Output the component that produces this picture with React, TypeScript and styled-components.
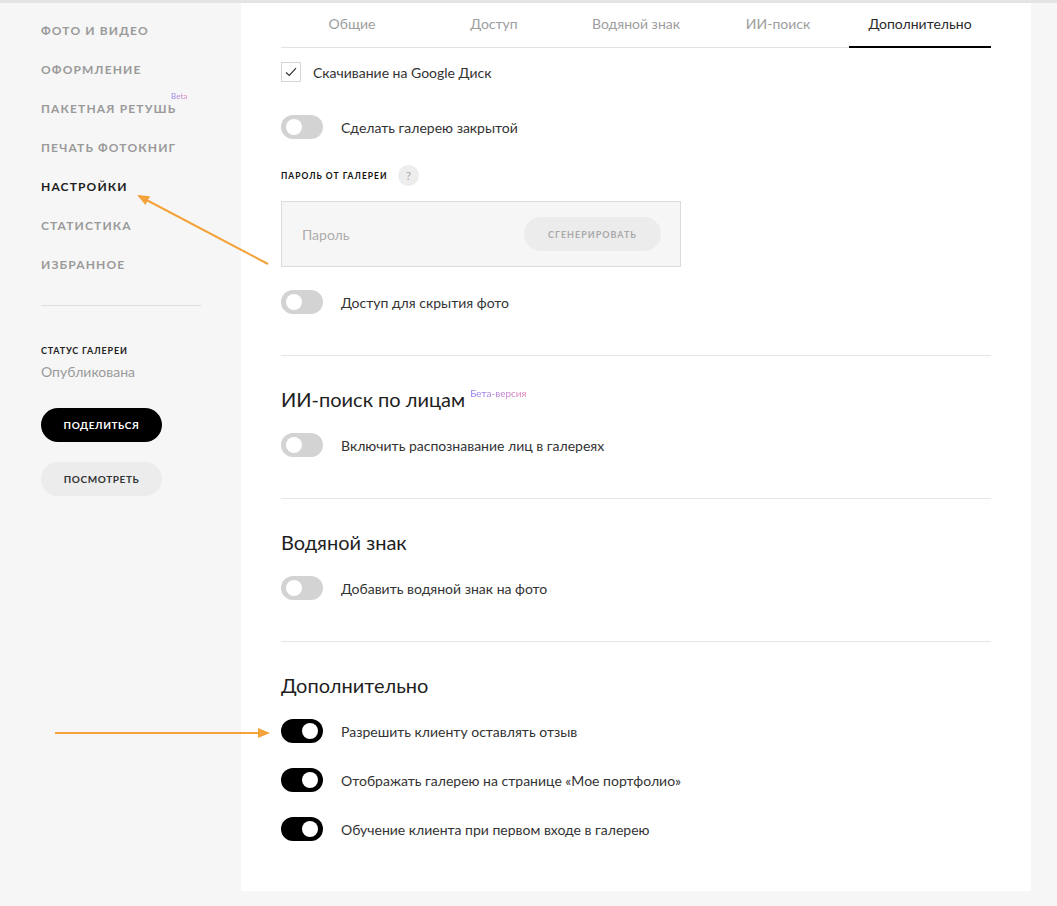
import React from "react";
import styled, { createGlobalStyle } from "styled-components";

const GlobalStyle = createGlobalStyle`
  html, body {
    margin: 0;
    padding: 0;
    background: #f6f6f6;
    font-family: Lato, "Open Sans", sans-serif;
    color: #333;
  }
  * { box-sizing: border-box; }
`;

const Page = styled.div`
  position: relative;
  width: 1057px;
  height: 906px;
  border-top: 3px solid #e4e4e4;
  display: flex;
  background: #f6f6f6;
  overflow: hidden;
`;

const Sidebar = styled.aside`
  width: 241px;
  padding: 8px 0 0 41px;
  display: flex;
  flex-direction: column;
`;

const NavItem = styled.div<{ $active?: boolean }>`
  position: relative;
  height: 39px;
  line-height: 39px;
  font-size: 12px;
  font-weight: 700;
  letter-spacing: 1.15px;
  text-transform: uppercase;
  color: ${(p) => (p.$active ? "#1d1d1d" : "#9a9a9a")};
  width: max-content;
`;

const BetaTag = styled.span`
  position: absolute;
  right: -11px;
  top: -12px;
  font-size: 8px;
  font-weight: 400;
  letter-spacing: 0;
  text-transform: none;
  background: linear-gradient(90deg, #8b7cf2, #e27fb7);
  -webkit-background-clip: text;
  background-clip: text;
  color: transparent;
`;

const SideDivider = styled.hr`
  width: 160px;
  margin: 21px 0 0;
  border: none;
  border-top: 1px solid #dedede;
`;

const StatusLabel = styled.div`
  margin-top: 39px;
  font-size: 9px;
  font-weight: 700;
  letter-spacing: 0.8px;
  color: #222;
`;

const StatusValue = styled.div`
  margin-top: 7px;
  font-size: 14px;
  color: #9a9a9a;
`;

const PillButton = styled.button<{ $dark?: boolean }>`
  width: 121px;
  height: 34px;
  border: none;
  border-radius: 17px;
  font-family: inherit;
  font-size: 10px;
  font-weight: 700;
  letter-spacing: 0.6px;
  background: ${(p) => (p.$dark ? "#000" : "#ececec")};
  color: ${(p) => (p.$dark ? "#fff" : "#333")};
  margin-top: ${(p) => (p.$dark ? "28px" : "20px")};
`;

const Panel = styled.main`
  width: 790px;
  height: 888px;
  background: #fff;
  padding: 0 40px;
`;

const Tabs = styled.nav`
  display: grid;
  grid-template-columns: repeat(5, 1fr);
  border-bottom: 1px solid #e3e3e3;
`;

const Tab = styled.div<{ $active?: boolean }>`
  height: 45px;
  display: flex;
  align-items: center;
  justify-content: center;
  padding-bottom: 3px;
  font-size: 14px;
  color: ${(p) => (p.$active ? "#2b2b2b" : "#9d9d9d")};
  border-bottom: 2px solid ${(p) => (p.$active ? "#000" : "transparent")};
  margin-bottom: -1px;
`;

const Row = styled.div<{ $top: number }>`
  display: flex;
  align-items: center;
  margin-top: ${(p) => p.$top}px;
  font-size: 14px;
  color: #333;
`;

const Checkbox = styled.span`
  width: 20px;
  height: 20px;
  border: 1px solid #d6d6d6;
  display: flex;
  align-items: center;
  justify-content: center;
  margin-right: 12px;
`;

const Track = styled.span<{ $on?: boolean }>`
  position: relative;
  width: 42px;
  height: 24px;
  border-radius: 12px;
  background: ${(p) => (p.$on ? "#000" : "#d3d3d3")};
  margin-right: 18px;
  flex-shrink: 0;
  &::after {
    content: "";
    position: absolute;
    top: 4px;
    left: ${(p) => (p.$on ? "21px" : "5px")};
    width: 16px;
    height: 16px;
    border-radius: 50%;
    background: #fff;
  }
`;

const FieldLabel = styled.div`
  margin-top: 26px;
  display: flex;
  align-items: center;
  font-size: 8.5px;
  font-weight: 700;
  letter-spacing: 1px;
  color: #111;
`;

const Help = styled.span`
  width: 21px;
  height: 21px;
  border-radius: 50%;
  background: #ededed;
  color: #aaa;
  font-size: 12px;
  font-weight: 400;
  display: flex;
  align-items: center;
  justify-content: center;
  margin-left: 11px;
`;

const PasswordBox = styled.div`
  width: 400px;
  height: 66px;
  margin-top: 15px;
  background: #f6f6f6;
  border: 1px solid #dcdcdc;
  display: flex;
  align-items: center;
  justify-content: space-between;
  padding: 0 19px 0 20px;
`;

const Placeholder = styled.span`
  font-size: 14px;
  color: #adadad;
`;

const GenButton = styled.span`
  width: 137px;
  height: 34px;
  border-radius: 17px;
  background: #ececec;
  color: #a9a9a9;
  font-size: 9px;
  font-weight: 700;
  letter-spacing: 1px;
  display: flex;
  align-items: center;
  justify-content: center;
`;

const Divider = styled.hr<{ $top: number }>`
  margin: ${(p) => p.$top}px 0 0;
  border: none;
  border-top: 1px solid #e6e6e6;
`;

const Heading = styled.h2`
  margin: 29px 0 0;
  font-size: 20px;
  font-weight: 400;
  color: #1e1e1e;
  line-height: 28px;
  display: flex;
  align-items: flex-start;
`;

const BetaSup = styled.span`
  font-size: 10px;
  margin-top: -6px;
  margin-left: 5px;
  background: linear-gradient(90deg, #8b7cf2, #e27fb7);
  -webkit-background-clip: text;
  background-clip: text;
  color: transparent;
`;

const Overlay = styled.svg`
  position: absolute;
  left: 0;
  top: -3px;
  pointer-events: none;
`;

const Toggle = ({ on, label, top }: { on?: boolean; label: string; top: number }) => (
  <Row $top={top}>
    <Track $on={on} />
    {label}
  </Row>
);

const nav = ["Фото и видео", "Оформление", "Пакетная ретушь", "Печать фотокниг", "Настройки", "Статистика", "Избранное"];
const tabs = ["Общие", "Доступ", "Водяной знак", "ИИ-поиск", "Дополнительно"];

export default function App() {
  return (
    <>
      <GlobalStyle />
      <Page>
        <Sidebar>
          {nav.map((n) => (
            <NavItem key={n} $active={n === "Настройки"}>
              {n}
              {n === "Пакетная ретушь" && <BetaTag>Beta</BetaTag>}
            </NavItem>
          ))}
          <SideDivider />
          <StatusLabel>СТАТУС ГАЛЕРЕИ</StatusLabel>
          <StatusValue>Опубликована</StatusValue>
          <PillButton $dark>ПОДЕЛИТЬСЯ</PillButton>
          <PillButton>ПОСМОТРЕТЬ</PillButton>
        </Sidebar>
        <Panel>
          <Tabs>
            {tabs.map((t) => (
              <Tab key={t} $active={t === "Дополнительно"}>
                {t}
              </Tab>
            ))}
          </Tabs>
          <Row $top={14}>
            <Checkbox>
              <svg width="12" height="10" viewBox="0 0 12 10">
                <path d="M1 5.5 L4.3 8.5 L11 1.2" fill="none" stroke="#333" strokeWidth="1.2" />
              </svg>
            </Checkbox>
            Скачивание на Google Диск
          </Row>
          <Toggle label="Сделать галерею закрытой" top={33} />
          <FieldLabel>
            ПАРОЛЬ ОТ ГАЛЕРЕИ <Help>?</Help>
          </FieldLabel>
          <PasswordBox>
            <Placeholder>Пароль</Placeholder>
            <GenButton>СГЕНЕРИРОВАТЬ</GenButton>
          </PasswordBox>
          <Toggle label="Доступ для скрытия фото" top={23} />
          <Divider $top={41} />
          <Heading>
            ИИ-поиск по лицам<BetaSup>Бета-версия</BetaSup>
          </Heading>
          <Toggle label="Включить распознавание лиц в галереях" top={20} />
          <Divider $top={41} />
          <Heading>Водяной знак</Heading>
          <Toggle label="Добавить водяной знак на фото" top={20} />
          <Divider $top={41} />
          <Heading>Дополнительно</Heading>
          <Toggle on label="Разрешить клиенту оставлять отзыв" top={20} />
          <Toggle on label="Отображать галерею на странице «Мое портфолио»" top={25} />
          <Toggle on label="Обучение клиента при первом входе в галерею" top={25} />
        </Panel>
        <Overlay width="1057" height="906" viewBox="0 0 1057 906">
          <defs>
            <marker id="ah" markerWidth="12" markerHeight="10" refX="10" refY="5" orient="auto" markerUnits="userSpaceOnUse">
              <path d="M0 0 L12 5 L0 10 Z" fill="#f4a23a" />
            </marker>
          </defs>
          <line x1="268" y1="264" x2="139" y2="196" stroke="#f4a23a" strokeWidth="2" markerEnd="url(#ah)" />
          <line x1="55" y1="733" x2="268" y2="733" stroke="#f4a23a" strokeWidth="2" markerEnd="url(#ah)" />
        </Overlay>
      </Page>
    </>
  );
}
